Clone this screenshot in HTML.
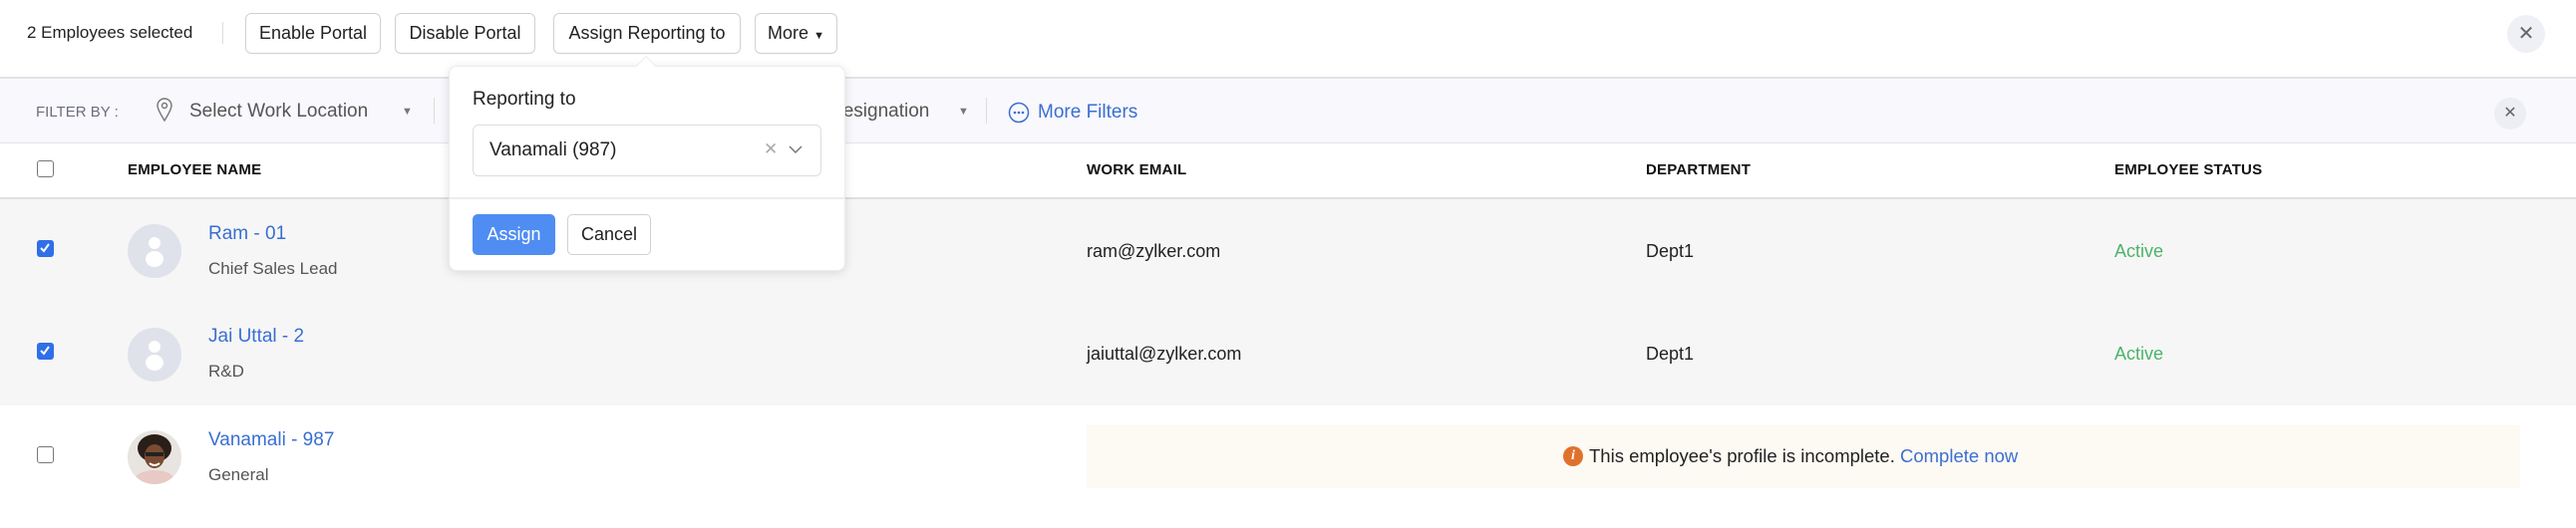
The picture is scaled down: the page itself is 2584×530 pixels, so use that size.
<!DOCTYPE html>
<html><head><meta charset="utf-8"><style>
*{box-sizing:border-box;margin:0;padding:0}
body{width:2584px;height:530px;overflow:hidden;background:#fff;font-family:"Liberation Sans",Arial,sans-serif;color:#222;position:relative}
.a{position:absolute;white-space:nowrap}
.btn{position:absolute;top:13px;height:41px;border:1.5px solid #cfd1d6;border-radius:6px;background:#fff;font-size:18px;line-height:38px;text-align:center;color:#222}
.cb{position:absolute;left:37px;width:17px;height:17px;border:1.5px solid #777;border-radius:3px;background:#fff}
.cb.on{background:#2f6fe8;border-color:#2f6fe8}
.hd{position:absolute;top:162px;font-size:15px;font-weight:bold;color:#111;letter-spacing:.2px}
.av{position:absolute;left:128px;width:54px;height:54px;border-radius:50%;background:#dfe2ea;overflow:hidden}
.nm{position:absolute;left:209px;font-size:19px;color:#3a6fd1}
.sb{position:absolute;left:209px;font-size:17px;color:#555}
.c{position:absolute;font-size:18px;color:#222}
.act{position:absolute;left:2121px;font-size:18px;color:#4cb36a}
</style></head><body>
<div class="a" style="left:27px;top:23px;font-size:17px;color:#222">2 Employees selected</div>
<div class="a" style="left:223px;top:22px;width:1px;height:22px;background:#ddd"></div>
<div class="btn" style="left:246px;width:136px">Enable Portal</div>
<div class="btn" style="left:396px;width:141px">Disable Portal</div>
<div class="btn" style="left:555px;width:188px">Assign Reporting to</div>
<div class="btn" style="left:757px;width:83px">More <span style="font-size:11px">▼</span></div>
<div class="a" style="left:2515px;top:15px;width:38px;height:38px;border-radius:50%;background:#eef0f5;text-align:center;line-height:38px;font-size:20px;color:#666">✕</div>
<div class="a" style="left:0;top:77px;width:2584px;height:2px;background:#e2e3e6"></div>
<div class="a" style="left:0;top:79px;width:2584px;height:65px;background:#f8f8fd;border-bottom:1.5px solid #e3e4e8"></div>
<div class="a" style="left:36px;top:104px;font-size:15px;color:#6b6f7b">FILTER BY :</div>
<svg class="a" style="left:156px;top:97px" width="18" height="26" viewBox="0 0 18 26"><path d="M9 24C4 16 2 12 2 9a7 7 0 0 1 14 0c0 3-2 7-7 15z" fill="none" stroke="#777" stroke-width="1.4"/><circle cx="9" cy="9" r="2.5" fill="none" stroke="#777" stroke-width="1.4"/></svg>
<div class="a" style="left:190px;top:101px;font-size:19px;color:#555">Select Work Location</div>
<div class="a" style="left:403px;top:106px;font-size:11px;color:#777">▼</div>
<div class="a" style="left:435px;top:98px;width:1px;height:26px;background:#ddd"></div>
<div class="a" style="left:832px;top:101px;font-size:19px;color:#555">Designation</div>
<div class="a" style="left:961px;top:106px;font-size:11px;color:#777">▼</div>
<div class="a" style="left:989px;top:98px;width:1px;height:26px;background:#ddd"></div>
<svg class="a" style="left:1011px;top:102px" width="22" height="22" viewBox="0 0 22 22"><circle cx="11" cy="11" r="9.5" fill="none" stroke="#3a6fd1" stroke-width="1.5"/><circle cx="7" cy="11" r="1.3" fill="#3a6fd1"/><circle cx="11" cy="11" r="1.3" fill="#3a6fd1"/><circle cx="15" cy="11" r="1.3" fill="#3a6fd1"/></svg>
<div class="a" style="left:1041px;top:102px;font-size:19px;color:#3a6fd1">More Filters</div>
<div class="a" style="left:2502px;top:98px;width:32px;height:32px;border-radius:50%;background:#eceef4;text-align:center;line-height:32px;font-size:16px;color:#666">✕</div>
<div class="cb" style="top:161px"></div>
<div class="hd" style="left:128px">EMPLOYEE NAME</div>
<div class="hd" style="left:1090px">WORK EMAIL</div>
<div class="hd" style="left:1651px">DEPARTMENT</div>
<div class="hd" style="left:2121px">EMPLOYEE STATUS</div>
<div class="a" style="left:0;top:198px;width:2584px;height:2px;background:#dedfe2"></div>
<div class="a" style="left:0;top:200px;width:2584px;height:207px;background:#f6f6f6"></div>
<div class="cb on" style="top:241px"><svg width="14" height="14" viewBox="0 0 14 14"><path d="M3 7l3 3 5-7" fill="none" stroke="#fff" stroke-width="2"/></svg></div>
<div class="av" style="top:225px"><svg width="54" height="54" viewBox="0 0 54 54"><circle cx="27" cy="19" r="6" fill="#fff"/><ellipse cx="27" cy="35" rx="9" ry="8" fill="#fff"/></svg></div>
<div class="nm" style="top:224px">Ram - 01</div>
<div class="sb" style="top:260px">Chief Sales Lead</div>
<div class="c" style="left:1090px;top:242px">ram@zylker.com</div>
<div class="c" style="left:1651px;top:242px">Dept1</div>
<div class="act" style="top:242px">Active</div>
<div class="cb on" style="top:344px"><svg width="14" height="14" viewBox="0 0 14 14"><path d="M3 7l3 3 5-7" fill="none" stroke="#fff" stroke-width="2"/></svg></div>
<div class="av" style="top:329px"><svg width="54" height="54" viewBox="0 0 54 54"><circle cx="27" cy="19" r="6" fill="#fff"/><ellipse cx="27" cy="35" rx="9" ry="8" fill="#fff"/></svg></div>
<div class="nm" style="top:327px">Jai Uttal - 2</div>
<div class="sb" style="top:363px">R&amp;D</div>
<div class="c" style="left:1090px;top:345px">jaiuttal@zylker.com</div>
<div class="c" style="left:1651px;top:345px">Dept1</div>
<div class="act" style="top:345px">Active</div>
<div class="cb" style="top:448px"></div>
<div class="av" style="top:432px;background:#e8e4e0"><svg width="54" height="54" viewBox="0 0 54 54"><ellipse cx="27" cy="50" rx="20" ry="10" fill="#e9c9c4"/><ellipse cx="27" cy="18" rx="17" ry="14" fill="#2a1e18"/><ellipse cx="27" cy="26" rx="10" ry="12" fill="#7a4b33"/><rect x="18" y="22" width="18" height="4" fill="#222"/><path d="M22 33q5 4 10 0" stroke="#fff" stroke-width="2" fill="none"/></svg></div>
<div class="nm" style="top:431px">Vanamali - 987</div>
<div class="sb" style="top:467px">General</div>
<div class="a" style="left:1090px;top:427px;width:1438px;height:63px;background:#fdf9f3"></div>
<div class="a" style="left:1568px;top:448px;width:20px;height:20px;border-radius:50%;background:#e0712c;color:#fff;font-size:14px;font-weight:bold;font-style:italic;text-align:center;line-height:20px;font-family:'Liberation Serif',serif">i</div>
<div class="a" style="left:1594px;top:447px;font-size:18.5px;color:#222">This employee's profile is incomplete. <span style="color:#3a6fd1">Complete now</span></div>
<div class="a" style="left:450px;top:66px;width:398px;height:206px;background:#fff;border-radius:8px;box-shadow:0 2px 10px rgba(0,0,0,.12);border:1px solid #ececec"></div>
<div class="a" style="left:641px;top:59px;width:14px;height:14px;background:#fff;transform:rotate(45deg);border-left:1px solid #ececec;border-top:1px solid #ececec"></div>
<div class="a" style="left:474px;top:89px;font-size:19px;color:#222">Reporting to</div>
<div class="a" style="left:474px;top:125px;width:350px;height:52px;border:1.5px solid #dcdde1;border-radius:6px;background:#fff"></div>
<div class="a" style="left:491px;top:140px;font-size:19px;color:#222">Vanamali (987)</div>
<div class="a" style="left:766px;top:140px;font-size:17px;color:#aaa">✕</div>
<svg class="a" style="left:791px;top:145px" width="14" height="10" viewBox="0 0 14 10"><path d="M1 2l6 6 6-6" fill="none" stroke="#777" stroke-width="1.5"/></svg>
<div class="a" style="left:451px;top:198px;width:396px;height:1.5px;background:#ececec"></div>
<div class="a" style="left:474px;top:215px;width:83px;height:41px;border-radius:5px;background:#4f8df2;color:#fff;font-size:18px;text-align:center;line-height:41px">Assign</div>
<div class="a" style="left:569px;top:215px;width:84px;height:41px;border-radius:5px;border:1.5px solid #cfd1d6;color:#222;font-size:18px;text-align:center;line-height:38px">Cancel</div>
</body></html>
